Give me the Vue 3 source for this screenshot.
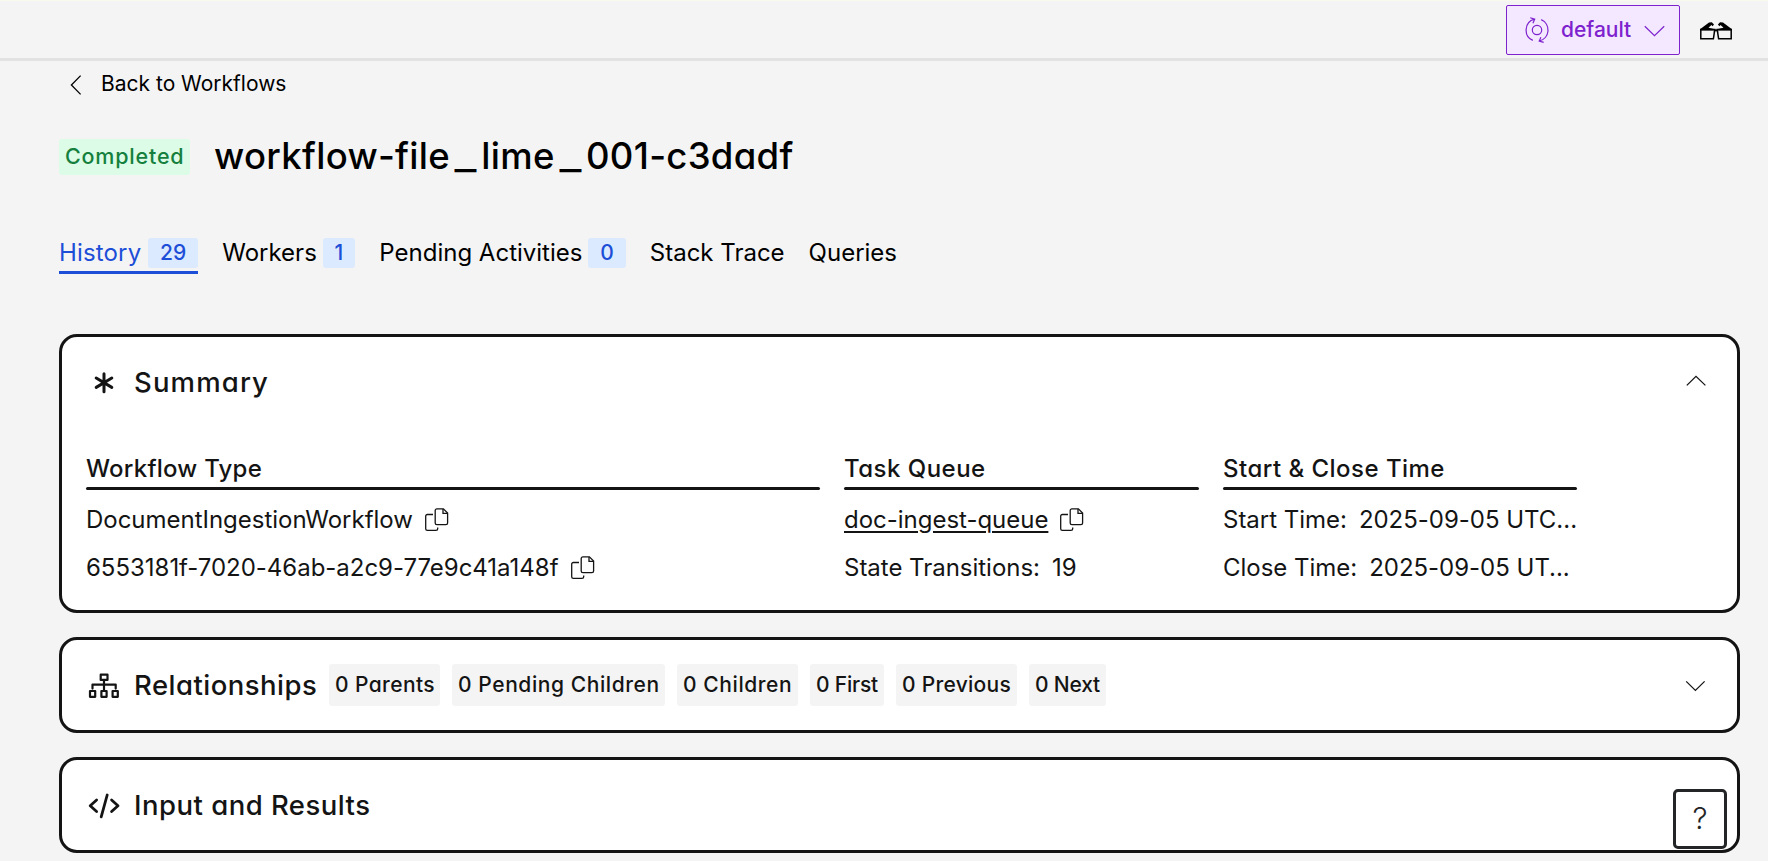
<script setup>
const tabs = [
  { label: 'History', count: 29, active: true },
  { label: 'Workers', count: 1 },
  { label: 'Pending Activities', count: 0 },
  { label: 'Stack Trace' },
  { label: 'Queries' },
]

const relationships = [
  { label: '0 Parents', name: 'parents' },
  { label: '0 Pending Children', name: 'pending' },
  { label: '0 Children', name: 'children' },
  { label: '0 First', name: 'first' },
  { label: '0 Previous', name: 'previous' },
  { label: '0 Next', name: 'next' },
]
</script>

<template>
  <div class="page">
    <header class="topbar">
      <button class="namespace">
        <svg class="ns-icon" width="24" height="26" viewBox="0 0 24 26">
          <circle cx="12" cy="13" r="4.7" />
          <path d="M7.8 23.4A11.3 11.3 0 0 1 9.4 2.2M5.2.8 9.7 2.2 7.9 6.2" />
          <path d="M16.2 2.6A11.3 11.3 0 0 1 14.3 24M15.9 20.2 14.2 24 18.7 25.3" />
        </svg>
        <span class="ns-name">default</span>
        <svg width="21" height="12" viewBox="0 0 21 12"><path d="M.8 1.2 10.5 10.6 20.2 1.2" /></svg>
      </button>
      <svg class="glasses" width="32" height="18" viewBox="0 0 32 18">
        <path class="lens" d="M.8 7.6H14.8L13.4 16.7H.8ZM31.2 7.6H17.2L18.6 16.7H31.2Z" />
        <path d="M0 7.2 9 .5 11.8.3 14 2.4 12.6 4.2 11.4 3 8.5 5.7 15.2 7.2V8.4H0Z" />
        <path d="M32 7.2 23 .5 20 .3 17.9 2.4 19.4 4.2 20.6 3 23.5 5.7 16.8 7.2V8.4H32Z" />
        <path d="M14.2 7.4H17.8L18.3 10.4 16 9 13.7 10.4Z" />
      </svg>
    </header>

    <main class="content">
      <a class="back">
        <svg width="12" height="20" viewBox="0 0 12 20"><path d="M10.6.6 1.4 10 10.6 19.4" /></svg>
        <span>Back to Workflows</span>
      </a>

      <div class="title-row">
        <span class="status">Completed</span>
        <h1>workflow-file<span class="sep">_</span>lime<span class="sep">_</span>001-c3dadf</h1>
      </div>

      <nav class="tabs">
        <a v-for="tab in tabs" :key="tab.label" class="tab" :class="{ active: tab.active }">
          <span>{{ tab.label }}</span>
          <span v-if="tab.count !== undefined" class="count">{{ tab.count }}</span>
        </a>
      </nav>

      <section class="card">
        <div class="card-head">
          <svg class="head-icon asterisk" width="36" height="36" viewBox="0 0 36 36">
            <path d="M18 9.7V27.7M10.2 14 25.8 23.4M25.8 14 10.2 23.4" />
          </svg>
          <h2 class="wide">Summary</h2>
          <svg class="toggle" width="24" height="24" viewBox="0 0 24 24"><path d="M2.8 15.4 12 6.4 21.4 15.4" /></svg>
        </div>
        <div class="details">
          <div class="col">
            <h3 class="type">Workflow Type</h3>
            <div class="bar"></div>
            <div class="line">
              <span>DocumentIngestionWorkflow</span>
              <svg class="copy" width="24" height="24" viewBox="0 0 24 24">
                <path d="M11.9.9H18.4L22.6 5.1V15A1.7 1.7 0 0 1 20.9 16.7H11.9A1.7 1.7 0 0 1 10.2 15V2.6A1.7 1.7 0 0 1 11.9.9Z" />
                <path d="M18 1V5.4H22.4M8 6.5H2.4A1.7 1.7 0 0 0 .7 8.2V20.7A1.7 1.7 0 0 0 2.4 22.4H11A1.7 1.7 0 0 0 12.7 20.7V19.5" />
              </svg>
            </div>
            <div class="line">
              <span>6553181f-7020-46ab-a2c9-77e9c41a148f</span>
              <svg class="copy" width="24" height="24" viewBox="0 0 24 24">
                <path d="M11.9.9H18.4L22.6 5.1V15A1.7 1.7 0 0 1 20.9 16.7H11.9A1.7 1.7 0 0 1 10.2 15V2.6A1.7 1.7 0 0 1 11.9.9Z" />
                <path d="M18 1V5.4H22.4M8 6.5H2.4A1.7 1.7 0 0 0 .7 8.2V20.7A1.7 1.7 0 0 0 2.4 22.4H11A1.7 1.7 0 0 0 12.7 20.7V19.5" />
              </svg>
            </div>
          </div>
          <div class="col">
            <h3>Task Queue</h3>
            <div class="bar"></div>
            <div class="line">
              <a class="link">doc-ingest-queue</a>
              <svg class="copy" width="24" height="24" viewBox="0 0 24 24">
                <path d="M11.9.9H18.4L22.6 5.1V15A1.7 1.7 0 0 1 20.9 16.7H11.9A1.7 1.7 0 0 1 10.2 15V2.6A1.7 1.7 0 0 1 11.9.9Z" />
                <path d="M18 1V5.4H22.4M8 6.5H2.4A1.7 1.7 0 0 0 .7 8.2V20.7A1.7 1.7 0 0 0 2.4 22.4H11A1.7 1.7 0 0 0 12.7 20.7V19.5" />
              </svg>
            </div>
            <div class="line"><span>State Transitions:</span><span>19</span></div>
          </div>
          <div class="col">
            <h3>Start &amp; Close Time</h3>
            <div class="bar"></div>
            <div class="line"><span>Start Time:</span><span>2025-09-05 UTC...</span></div>
            <div class="line"><span>Close Time:</span><span>2025-09-05 UT...</span></div>
          </div>
        </div>
      </section>

      <section class="card">
        <div class="card-head">
          <svg class="head-icon tree" width="36" height="36" viewBox="0 0 36 36">
            <rect x="14.7" y="7.7" width="6.8" height="5.2" />
            <path d="M18 13V24M6.5 21.6V17.6H29.7V21.6" />
            <rect x="4" y="24" width="5.2" height="5.8" />
            <rect x="15.4" y="24" width="5.2" height="5.8" />
            <rect x="26.6" y="24" width="5.2" height="5.8" />
          </svg>
          <h2>Relationships</h2>
          <div class="chips">
            <span v-for="item in relationships" :key="item.name" class="chip" :class="item.name">{{ item.label }}</span>
          </div>
          <svg class="toggle" width="24" height="24" viewBox="0 0 24 24"><path d="M2.2 8.4 11.4 17.4 20.6 8.4" /></svg>
        </div>
      </section>

      <section class="card">
        <div class="card-head">
          <svg class="head-icon code" width="36" height="36" viewBox="0 0 36 36">
            <path d="M10.6 13 4.2 18.7 10.6 24.5M21.2 8 15.2 29.8M25.6 13 32 18.7 25.6 24.5" />
          </svg>
          <h2>Input and Results</h2>
        </div>
      </section>
    </main>

    <button class="help">?</button>
  </div>
</template>

<style>
body {
  background: #f4f4f4;
  overflow: hidden;
}
</style>

<style scoped>
.page {
  box-sizing: border-box;
  height: 861px;
  overflow: hidden;
  background: #f4f4f4;
  color: #141414;
  font-family: Inter, sans-serif;
  border-top: 1px solid #f8faee;
}
svg {
  flex: none;
  fill: none;
  stroke: currentColor;
}
button {
  font-family: inherit;
  margin: 0;
}
h1, h2, h3 {
  margin: 0;
  font-weight: 500;
  white-space: nowrap;
}
h1, h2, h3, .status, .chip {
  font-feature-settings: "cv11";
}
.topbar {
  box-sizing: border-box;
  height: 60px;
  border-bottom: 3px solid #e2e2e2;
  display: flex;
  align-items: center;
  justify-content: flex-end;
  gap: 20px;
  padding: 0 36px 0 0;
}
.namespace {
  box-sizing: border-box;
  width: 174px;
  height: 50px;
  margin-top: 1px;
  padding: 0 14px 0 18px;
  display: flex;
  align-items: center;
  border: 1px solid #7e22ce;
  border-radius: 2px;
  background: #f3e8ff;
  color: #7e22ce;
  stroke-width: 1.2;
}
.ns-name {
  flex: 1;
  margin-left: 12px;
  text-align: left;
  font-size: 21px;
  line-height: 30px;
  font-weight: 500;
}
.namespace svg:last-child {
  margin-top: 2px;
}
.glasses {
  color: #000;
  margin-top: 3px;
}
.glasses path {
  fill: #000;
  stroke: none;
}
.glasses .lens {
  fill: none;
  stroke: #000;
  stroke-width: 1.5;
}
.content {
  padding: 7px 28px 0 59px;
}
.back {
  display: flex;
  align-items: center;
  gap: 19px;
  height: 30px;
  padding-left: 11px;
  color: #000;
  font-size: 21px;
  line-height: 30px;
}
.back span {
  padding-top: 2px;
}
.back svg {
  stroke-width: 1.3;
  margin-top: 3px;
}
.title-row {
  display: flex;
  align-items: center;
  gap: 24px;
  height: 48px;
  margin-top: 35px;
}
.status {
  box-sizing: border-box;
  width: 131px;
  height: 36px;
  padding-left: 6px;
  border-radius: 3px;
  background: #dcfce7;
  color: #15803d;
  font-size: 21.5px;
  line-height: 35px;
  font-weight: 500;
  letter-spacing: 0.8px;
}
h1 {
  color: #000;
  font-size: 36.5px;
  line-height: 46px;
  padding-bottom: 2px;
  letter-spacing: 0.3px;
}
.sep {
  display: inline-block;
  margin: 0 7px;
  transform: scaleX(1.3);
}
.tabs {
  display: flex;
  gap: 24px;
  height: 36px;
  margin-top: 57px;
}
.tab {
  box-sizing: border-box;
  display: flex;
  gap: 5.8px;
  height: 36px;
  border-bottom: 3px solid transparent;
  color: #000;
  font-size: 24px;
  line-height: 29px;
}
.tab.active {
  gap: 6.8px;
  color: #1d4ed8;
  border-color: #1d4ed8;
  letter-spacing: 0.15px;
}
.count {
  height: 30px;
  padding: 0 12px;
  border-radius: 3px;
  background: #dbeafe;
  color: #1d4ed8;
  font-size: 21px;
  line-height: 29px;
  font-weight: 500;
  letter-spacing: 0;
}
.card {
  border: 3px solid #141414;
  border-radius: 18px;
  background: #fff;
  margin-top: 24px;
}
.tabs + .card {
  margin-top: 60px;
}
.card-head {
  display: flex;
  align-items: center;
  height: 90px;
  padding: 0 29px 0 24px;
}
.head-icon {
  margin-right: 12px;
  stroke-linecap: round;
  stroke-linejoin: round;
}
.asterisk {
  stroke-width: 3;
}
.tree {
  stroke-width: 2.2;
}
.code {
  stroke-width: 2.8;
}
h2 {
  font-size: 27.5px;
  line-height: 36px;
  width: 183px;
  letter-spacing: 0.48px;
}
h2.wide {
  letter-spacing: 1.15px;
}
.toggle {
  margin-left: auto;
  stroke-width: 1.3;
}
.chips {
  display: flex;
  gap: 12px;
  margin-left: 12px;
}
.chip {
  box-sizing: border-box;
  height: 42px;
  padding-left: 6px;
  border-radius: 3px;
  background: #f4f4f4;
  font-size: 21px;
  line-height: 41px;
  font-weight: 500;
  white-space: nowrap;
}
.parents { width: 111px; letter-spacing: 0.4px; }
.pending { width: 213px; letter-spacing: 0.58px; }
.children { width: 121px; letter-spacing: 0.58px; }
.first { width: 74px; letter-spacing: -0.2px; }
.previous { width: 121px; letter-spacing: 0.27px; }
.next { width: 77px; letter-spacing: -0.19px; }
.details {
  display: grid;
  grid-template-columns: 734px 355px 354px;
  gap: 24px;
  padding: 24px;
}
h3 {
  font-size: 24px;
  line-height: 36px;
  letter-spacing: 0.48px;
}
h3.type {
  letter-spacing: 0.24px;
}
.bar {
  height: 3px;
  border-radius: 1.5px;
  background: #141414;
}
.line {
  display: flex;
  align-items: center;
  gap: 12px;
  height: 36px;
  margin-top: 12px;
  font-size: 24px;
  line-height: 36px;
  letter-spacing: -0.02px;
  white-space: nowrap;
}
.copy {
  stroke-width: 1.3;
}
.link {
  text-decoration: underline;
  text-decoration-thickness: 2px;
  text-underline-offset: 3px;
}
.help {
  position: absolute;
  left: 1673px;
  top: 789px;
  box-sizing: border-box;
  width: 54px;
  height: 60px;
  padding: 0 0 2px;
  border: 3px solid #232526;
  border-radius: 5px;
  background: #fff;
  color: #232526;
  font-size: 30px;
  font-weight: 300;
}
</style>
